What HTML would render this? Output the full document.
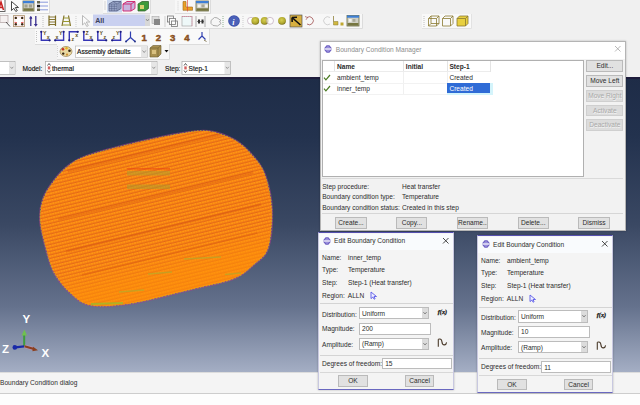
<!DOCTYPE html>
<html><head><meta charset="utf-8">
<style>
*{margin:0;padding:0;box-sizing:border-box}
html,body{width:640px;height:405px;overflow:hidden;background:#f0f0f0;font-family:"Liberation Sans",sans-serif;font-size:6.6px;color:#2c2c2c}
.a{position:absolute}
.t{position:absolute;white-space:nowrap;line-height:8px}
.btn{position:absolute;background:#e1e1e1;border:1px solid #bababa;text-align:center;white-space:nowrap;overflow:hidden}
#root{position:absolute;left:0;top:0;width:640px;height:405px;overflow:hidden}
.btn.dis{color:#a8a8a8;background:#dcdcdc;border-color:#cfcfcf;text-shadow:0.5px 0.5px 0 #f4f4f4}
</style></head><body>
<div id="root"><!-- toolbar -->
<svg class="a" style="left:0;top:0" width="640" height="77" viewBox="0 0 640 77">
  <defs><radialGradient id="olv" cx="0.45" cy="0.4" r="0.6"><stop offset="0" stop-color="#d8d050"/><stop offset="0.7" stop-color="#b0a830"/><stop offset="1" stop-color="#7a7018"/></radialGradient></defs>
  <!-- panels -->
  <rect x="0" y="0" width="49" height="13" fill="#fafafa"/>
  <path d="M49.5 0V13.5H0" fill="none" stroke="#dcdcdc"/>
  <rect x="103" y="0" width="47" height="13" fill="#f7f7f7"/>
  <path d="M150.5 0V13.5H103" fill="none" stroke="#dcdcdc"/>
  <rect x="175" y="0" width="35" height="13" fill="#f7f7f7"/>
  <path d="M210.5 0V13.5H175" fill="none" stroke="#dcdcdc"/>
  <rect x="0" y="14" width="362" height="14" fill="#f7f7f7"/>
  <path d="M362.5 14V28.5H0" fill="none" stroke="#dcdcdc"/>
  <rect x="422" y="14" width="49" height="14" fill="#f9f9f9"/>
  <path d="M471.5 14V28.5H422" fill="none" stroke="#e2e2e2"/>
  <rect x="35" y="29" width="174" height="15" fill="#f9f9f9"/>
  <path d="M209.5 29V44.5H35" fill="none" stroke="#dcdcdc"/>
  <rect x="57" y="44" width="112" height="15" fill="#f7f7f7"/>
  <path d="M169.5 44V59.5H57" fill="none" stroke="#dcdcdc"/>

  <!-- row1 -->
  <rect x="-1" y="-1" width="6" height="12.5" fill="#fff" stroke="#555" stroke-width="0.9"/>
  <path d="M-1.5 10L1 2L3.5 10M-0.5 7.5H2.5" fill="none" stroke="#c82020" stroke-width="1.5"/>
  <path d="M11.5 1.5V10.5L13.8 8.3L15.8 11.5L17.3 10.6L15.3 7.5H18.5Z" fill="#fff" stroke="#333" stroke-width="0.9"/>
  <rect x="23" y="1" width="11" height="10" fill="#cfcfc4" stroke="#6a6a40" stroke-width="0.8"/>
  <rect x="23" y="1" width="11" height="2.2" fill="#3d7fd6"/>
  <rect x="24.5" y="4.5" width="3" height="3" fill="#a0a090"/><rect x="29" y="4.5" width="3" height="3" fill="#a0a090"/>
  <rect x="23.5" y="8.3" width="10" height="2.5" fill="#767640"/>
  <rect x="37" y="1" width="3" height="2.5" fill="#6a6a50"/><rect x="37" y="4.8" width="3" height="2.5" fill="#222"/><rect x="37" y="8.5" width="3" height="2.5" fill="#6a6a50"/>
  <path d="M40 2.2H48M40 6H48M40 9.8H48" stroke="#7d8fd8" stroke-width="0.9"/>
  <path d="M105 1.5V10" stroke="#999" stroke-width="0.7" stroke-dasharray="1 1"/>
  <rect x="107" y="0" width="15" height="12.5" fill="#c9d6ee"/>
  <path d="M109 4L113 1.5H121V8.5L117 11H109Z" fill="#9aa6c8" stroke="#4a5478" stroke-width="0.7"/>
  <path d="M109 4H117V11M117 4L121 1.5M111.7 4V11M114.3 4V11M109 6.3H117M109 8.6H117M113 1.5L117 4M119 2.8V9.8" stroke="#4f5a80" stroke-width="0.5" fill="none"/>
  <path d="M123 4L127 1.5H135V8.5L131 11H123Z" fill="#c8b4de" stroke="#d0206a" stroke-width="0.9"/>
  <path d="M123 4H131V11M131 4L135 1.5" stroke="#d0206a" stroke-width="0.9" fill="none"/>
  <path d="M138 4L142 1.5H148.5V8.5L145 11H138Z" fill="#3f9a3a" stroke="#2a5a22" stroke-width="0.7"/>
  <rect x="140" y="5" width="4" height="4" fill="#d8d070"/>
  <path d="M178 1.5V11" stroke="#aaa" stroke-width="0.6" stroke-dasharray="0.8 1.2"/>
  <path d="M183 1.5H186V7H192.5V10.3H183Z" fill="#eca028" stroke="#9a6a18" stroke-width="0.6"/>
  <path d="M187.5 0V11.5" stroke="#e03838" stroke-width="0.6"/>
  <rect x="196" y="1" width="12.5" height="10" fill="#cfcfc4" stroke="#6a6a40" stroke-width="0.8"/>
  <rect x="196" y="1" width="12.5" height="2.2" fill="#3d7fd6"/>
  <rect x="196.5" y="8.3" width="11.5" height="2.5" fill="#767640"/>
  <rect x="197.8" y="4.5" width="2.8" height="2.8" fill="#f4f4f0"/><rect x="201.6" y="4.5" width="2.8" height="2.8" fill="#a8a898"/><rect x="205.2" y="4.5" width="2.4" height="2.8" fill="#f4f4f0"/>

  <!-- row2 -->
  <rect x="0" y="15.5" width="8" height="7" fill="#f4f0f0" stroke="#b0a0a0" stroke-width="0.7"/>
  <path d="M6 22L10 26.5" stroke="#555" stroke-width="1"/>
  <rect x="13.5" y="15.6" width="11" height="11" fill="#fbeef0" stroke="#b39a78" stroke-width="0.9"/>
  <circle cx="19" cy="21.1" r="3.2" fill="#fff"/>
  <circle cx="15.8" cy="17.9" r="1.2" fill="#3a2a10"/><circle cx="22.2" cy="17.9" r="1.2" fill="#3a2a10"/><circle cx="15.8" cy="24.3" r="1.2" fill="#3a2a10"/><circle cx="22.2" cy="24.3" r="1.2" fill="#3a2a10"/>
  <path d="M14.5 22.6H17M21 22.6H23.5" stroke="#e04a4a" stroke-width="0.9"/>
  <path d="M30.8 17.5V26M35.8 16V24.5" stroke="#3a3090" stroke-width="1.3"/>
  <path d="M29.2 18.8L30.8 16L32.4 18.8Z" fill="#3a3090"/><circle cx="30.8" cy="17.6" r="1.1" fill="#3a3090"/>
  <path d="M33.9 24L35.8 26.8L37.7 24Z" fill="#3a3090"/>
  <path d="M43 16V27" stroke="#aaa" stroke-width="0.7" stroke-dasharray="1 1"/>
  <path d="M49 15.5V26M55.5 15.5V26" stroke="#80702a" stroke-width="1.2"/>
  <path d="M49 17H55.5M49 19.5H55.5M49 22H55.5M49 24.5H55.5" stroke="#7a6a20" stroke-width="0.9"/>
  <path d="M64 15.5L62 26M68.5 15.5L70.5 26" stroke="#80702a" stroke-width="1.2"/>
  <path d="M63.5 18H69M63 21.5H69.5M62.5 25H70.5" stroke="#9a9a30" stroke-width="1"/>
  <path d="M76 16V27" stroke="#bbb" stroke-width="0.7" stroke-dasharray="1 1"/>
  <path d="M82.5 15.5V25L84.8 22.8L86.8 26.5L88.3 25.6L86.3 22H89.8Z" fill="#fafafa" stroke="#aaa" stroke-width="0.8"/>
  <rect x="93" y="14.5" width="52" height="11.5" fill="#c9d0f0"/>
  <rect x="145" y="14.5" width="5" height="11.5" fill="#d8d8d8"/>
  <path d="M146 19L147.5 21L149 19" stroke="#777" stroke-width="0.7" fill="none"/>
  <text x="95.2" y="23.2" font-size="7" font-weight="bold" fill="#3a4058" font-family="Liberation Sans">All</text>
  <rect x="152" y="16.5" width="7" height="7" fill="#ddd" stroke="#aaa" stroke-width="0.6"/><rect x="154" y="19" width="6" height="6" fill="#888"/>
  <path d="M165 16V27" stroke="#bbb" stroke-width="0.7"/>
  <rect x="167.5" y="16" width="6" height="6" fill="none" stroke="#777" stroke-width="0.8"/><rect x="169.5" y="18.5" width="6" height="6" fill="#fff" stroke="#777" stroke-width="0.8"/><rect x="171.5" y="21" width="6" height="5.5" fill="none" stroke="#777" stroke-width="0.8"/>
  <rect x="182" y="16.5" width="10" height="9.5" fill="#eef8f8" stroke="#999" stroke-width="0.6"/>
  <path d="M182 16.5H192V26" stroke="#e07090" stroke-width="0.7" stroke-dasharray="1.2 0.8" fill="none"/>
  <path d="M196 16V27M205 16V27" stroke="#888" stroke-width="0.7"/>
  <path d="M197 21.5H204" stroke="#555" stroke-width="0.7"/><rect x="198" y="19.5" width="2" height="4" fill="#333"/><rect x="201.5" y="19.5" width="2" height="4" fill="#333"/>
  <path d="M211 20.5L214.5 17.5L217 17.8L221 20.5L219.5 21.5L221 23.5L217.5 26L213 25.5L211 23.5Z" fill="#f6f6f6" stroke="#9a9a9a" stroke-width="0.8"/>
  <path d="M223 16V27" stroke="#6a9a6a" stroke-width="0.7" stroke-dasharray="1 1"/>
  <circle cx="234" cy="21" r="5.8" fill="#3a4ea8"/>
  <circle cx="234" cy="21" r="5" fill="#4a60b8"/>
  <text x="232.3" y="24.5" font-size="8" font-style="italic" font-weight="bold" fill="#fff" font-family="Liberation Serif">i</text>
  <path d="M243 16V27" stroke="#bbb" stroke-width="0.7" stroke-dasharray="1 1"/>
  <circle cx="251" cy="20.8" r="3.5" fill="#fff" stroke="#b59ab0" stroke-width="0.6"/>
  <circle cx="255.3" cy="20.8" r="3.9" fill="url(#olv)"/>
  <circle cx="264.6" cy="20.8" r="3.9" fill="url(#olv)"/>
  <circle cx="270" cy="20.8" r="3.5" fill="#fff" fill-opacity="0.6" stroke="#b59ab0" stroke-width="0.6"/>
  <circle cx="282" cy="20.8" r="3.9" fill="url(#olv)"/>
  <rect x="290" y="15" width="12" height="12" fill="#d8b040" stroke="#555" stroke-width="0.7"/>
  <path d="M292 17.5L300.5 25M292 17.5L297 17.3M292 17.5L292.2 22" stroke="#111" stroke-width="1.6" fill="none"/>
  <path d="M307 17.5A4 4 0 1 1 307 24" fill="none" stroke="#a05050" stroke-width="0.8"/>
  <path d="M305 16.5L307.5 17.5L306 19.8" fill="none" stroke="#a05050" stroke-width="0.7"/>
  <path d="M330 17.5A4 4 0 1 0 330 24" fill="none" stroke="#c8c8c8" stroke-width="0.8"/>
  <path d="M333.5 16V21.5H338V25H333.5Z" fill="#d0b840" stroke="#8a7a30" stroke-width="0.5"/>
  <rect x="340.5" y="22.5" width="3" height="3" fill="#c0a830"/>
  <rect x="347" y="15.5" width="12" height="10.5" fill="#cfcfc4" stroke="#6a6a40" stroke-width="0.8"/>
  <rect x="347" y="15.5" width="12" height="2.2" fill="#3d7fd6"/>
  <rect x="347.5" y="23" width="11" height="2.7" fill="#767640"/>
  <rect x="348.8" y="19" width="2.8" height="2.8" fill="#f4f4f0"/><rect x="352.6" y="19" width="2.8" height="2.8" fill="#a8a898"/>
  <path d="M424 16V27" stroke="#aaa" stroke-width="0.7" stroke-dasharray="1 1"/>
  <g fill="none" stroke="#8a7a30" stroke-width="0.8">
    <path d="M428.5 18.5L431 16H439V23.5L436.5 26H428.5Z M428.5 18.5H436.5V26M436.5 18.5L439 16 M431 16V23.5H439M431 23.5L428.5 26"/>
    <path d="M442.5 18.5L445 16H453V23.5L450.5 26H442.5Z M442.5 18.5H450.5V26M450.5 18.5L453 16"/>
  </g>
  <path d="M457 18.5L459.5 16H468V23.5L465.5 26H457Z" fill="#e8d040" stroke="#8a7a30" stroke-width="0.8"/>
  <path d="M457 18.5H465.5V26M465.5 18.5L468 16" fill="none" stroke="#8a7a30" stroke-width="0.8"/>

  <!-- row3 -->
  <path d="M36.5 31V42" stroke="#aaa" stroke-width="0.7" stroke-dasharray="1 1"/>
  <g stroke="#3535b5" stroke-width="1.4" fill="none" stroke-linecap="round">
  <path d="M41.3 31.8V40.3H49.6"/>
  <path d="M63.6 31.8V40.3H55.2"/>
  <path d="M69.3 40.3V31.8H77.7"/>
  <path d="M83.8 31.8V40.3H92.2"/>
  <path d="M97.8 31.8V40.3H106.2"/>
  <path d="M120.6 31.8V40.3H112.2"/>
  </g>
  <g fill="#1c1c80">
  <circle cx="41.3" cy="31.8" r="1.15"/>
  <circle cx="49.6" cy="40.3" r="1.15"/>
  <circle cx="63.6" cy="31.8" r="1.15"/>
  <circle cx="55.2" cy="40.3" r="1.15"/>
  <circle cx="69.3" cy="40.3" r="1.15"/>
  <circle cx="77.7" cy="31.8" r="1.15"/>
  <circle cx="83.8" cy="31.8" r="1.15"/>
  <circle cx="92.2" cy="40.3" r="1.15"/>
  <circle cx="97.8" cy="31.8" r="1.15"/>
  <circle cx="106.2" cy="40.3" r="1.15"/>
  <circle cx="120.6" cy="31.8" r="1.15"/>
  <circle cx="112.2" cy="40.3" r="1.15"/>
  </g>
  <g font-family="Liberation Sans" font-size="5.2" fill="#5e5020" font-weight="bold">
  <text x="42.9" y="35.0">Y</text><text x="46.800000000000004" y="38.6">x</text>
  <text x="55.400000000000006" y="38.6">x</text><text x="59.0" y="35.0">Y</text>
  <text x="71.5" y="41.099999999999994">z</text><text x="75.3" y="37.4">x</text>
  <text x="85.39999999999999" y="35.0">Z</text><text x="89.4" y="38.6">x</text>
  <text x="99.39999999999999" y="35.0">Y</text><text x="103.4" y="38.6">z</text>
  <text x="112.4" y="38.6">z</text><text x="116.0" y="35.0">Y</text>
  </g>
  <path d="M130.5 37.5V31.5M130.5 37.5L126 41.5M130.5 37.5L135 41.5" stroke="#2f3fb0" stroke-width="1.2" fill="none"/>
  <circle cx="126" cy="41.5" r="0.9" fill="#1a2a80"/><circle cx="135" cy="41.5" r="0.9" fill="#1a2a80"/>
  <g font-family="Liberation Sans" font-size="9.6" font-weight="bold" fill="#8a5020" stroke="#8a5020" stroke-width="0.45">
    <text x="141.5" y="40.5">1</text><text x="155.8" y="40.5">2</text><text x="170" y="40.5">3</text><text x="184.3" y="40.5">4</text>
  </g>
  <path d="M202 36V32M202 36L198.5 39.5M202 36L205.5 39.5" stroke="#2f3fb0" stroke-width="1.2" fill="none"/>
  <path d="M204 40L206.5 41.5" stroke="#6a5a30" stroke-width="0.8"/>

  <!-- row4 -->
  <path d="M57.5 46V57" stroke="#aaa" stroke-width="0.6" stroke-dasharray="0.8 1.2"/>
  <ellipse cx="66" cy="51.5" rx="6" ry="5" fill="#e8d8a0" stroke="#8a7040" stroke-width="0.6"/>
  <circle cx="63" cy="49.3" r="1.3" fill="#c83020"/><circle cx="66.5" cy="48.3" r="1.2" fill="#e8b020"/><circle cx="69.5" cy="50.8" r="1.3" fill="#302010"/><circle cx="63.2" cy="53.6" r="1.2" fill="#302010"/><circle cx="67" cy="54.6" r="1.1" fill="#d09030"/>
  <rect x="75.5" y="46" width="72" height="11.5" fill="#fff" stroke="#b0b0b0" stroke-width="0.6"/>
  <rect x="141" y="46.3" width="6.2" height="11" fill="#e6e6e6"/>
  <path d="M142.5 50.5L144.2 52.5L145.8 50.5" stroke="#777" stroke-width="0.7" fill="none"/>
  <text x="77" y="54.3" font-size="6.6" fill="#111" stroke="#111" stroke-width="0.15" font-family="Liberation Sans">Assembly defaults</text>
  <path d="M150 48L153 45.5H161V54L158 57H150Z" fill="#a89050" stroke="#6a5a30" stroke-width="0.6"/>
  <path d="M150 48H158V57M158 48L161 45.5" stroke="#6a5a30" stroke-width="0.6" fill="none"/>
  <rect x="152" y="50" width="4" height="4" fill="#d8c080"/>
  <path d="M164.5 50L166.5 52.5L168.5 50Z" fill="#111"/>

  <!-- row5 -->
  <rect x="-1" y="61.5" width="16" height="13" fill="#fff" stroke="#a8a8a8" stroke-width="0.7"/>
  <rect x="9" y="62" width="5.5" height="12" fill="#e6e6e6"/>
  <path d="M10.3 66.8L11.8 68.5L13.3 66.8" stroke="#777" stroke-width="0.7" fill="none"/>
  <text x="22.5" y="71" font-size="6.6" fill="#111" stroke="#111" stroke-width="0.15" font-family="Liberation Sans">Model:</text>
  <rect x="45.5" y="61.5" width="111.5" height="13" fill="#fff" stroke="#a8a8a8" stroke-width="0.7"/>
  <rect x="151" y="62" width="5.5" height="12" fill="#e6e6e6"/>
  <path d="M152.3 66.8L153.8 68.5L155.3 66.8" stroke="#777" stroke-width="0.7" fill="none"/>
  <path d="M47.5 65.5L49 63.5L50.5 65.5M47.5 70.5L49 72.5L50.5 70.5" stroke="#333" stroke-width="0.8" fill="none"/>
  <rect x="47.8" y="66.4" width="2.4" height="3" fill="#d06060"/>
  <text x="52" y="71" font-size="6.6" fill="#111" stroke="#111" stroke-width="0.15" font-family="Liberation Sans">thermal</text>
  <text x="165" y="71" font-size="6.6" fill="#111" stroke="#111" stroke-width="0.15" font-family="Liberation Sans">Step:</text>
  <rect x="182" y="61.5" width="48.5" height="13" fill="#fff" stroke="#a8a8a8" stroke-width="0.7"/>
  <rect x="224.5" y="62" width="5.5" height="12" fill="#e6e6e6"/>
  <path d="M225.8 66.8L227.3 68.5L228.8 66.8" stroke="#777" stroke-width="0.7" fill="none"/>
  <path d="M184 65.5L185.5 63.5L187 65.5M184 70.5L185.5 72.5L187 70.5" stroke="#333" stroke-width="0.8" fill="none"/>
  <rect x="184.3" y="66.4" width="2.4" height="3" fill="#d06060"/>
  <text x="188.5" y="71" font-size="6.6" fill="#111" stroke="#111" stroke-width="0.15" font-family="Liberation Sans">Step-1</text>
</svg>
<div class="a" style="left:0;top:77px;width:640px;height:295px;background:linear-gradient(#1e2c47 0%,#23324e 20%,#3a4863 50%,#65728d 78%,#a4aec4 100%)"></div>
<div class="a" style="left:0;top:77px;width:640px;height:2px;background:#1e1c3c"></div>
<svg class="a" style="left:0;top:77px" width="640" height="295" viewBox="0 77 640 295">
  <defs>
    <pattern id="mesh" width="2.6" height="3.4" patternUnits="userSpaceOnUse" patternTransform="rotate(-13.5)">
      <rect width="2.6" height="3.4" fill="#ff9614"/>
      <path d="M0 1H2.6" stroke="#d8561a" stroke-width="0.9"/>
      <path d="M0.6 0V3.4" stroke="#f27412" stroke-width="0.6"/>
    </pattern>
    <linearGradient id="lowg" x1="0" y1="0" x2="0" y2="1"><stop offset="0" stop-color="#ff9008" stop-opacity="0"/><stop offset="0.35" stop-color="#ff9008" stop-opacity="0.6"/><stop offset="1" stop-color="#ff9008" stop-opacity="0.7"/></linearGradient>
    <clipPath id="cc"><path d="M40.6 221.0C40.1 212.8 41.1 205.8 43.5 199.0C45.9 192.2 50.6 185.7 55.0 180.0C59.4 174.3 64.4 169.1 70.0 165.0C75.6 160.9 78.1 159.2 88.7 155.6C99.3 152.0 118.1 147.2 133.7 143.5C149.3 139.8 170.0 135.5 182.5 133.5C195.0 131.5 199.9 130.3 208.7 131.5C217.4 132.7 227.5 136.3 235.0 140.6C242.5 144.9 248.7 151.6 253.7 157.5C258.7 163.4 262.0 167.2 265.0 176.0C268.0 184.8 271.1 198.0 271.5 210.0C271.9 222.0 270.7 238.9 267.7 248.0C264.7 257.1 259.2 259.3 253.4 264.4C247.6 269.5 243.2 274.5 233.0 278.6C222.8 282.7 209.4 284.7 192.5 288.8C175.6 292.8 148.5 300.3 131.6 303.0C114.7 305.7 101.2 306.7 91.0 305.0C80.8 303.3 76.7 298.2 70.6 292.8C64.5 287.4 58.5 280.0 54.4 272.5C50.3 265.0 48.5 256.6 46.2 248.0C44.0 239.4 41.1 229.2 40.6 221.0Z"/></clipPath>
  </defs>
  <path d="M40.6 221.0C40.1 212.8 41.1 205.8 43.5 199.0C45.9 192.2 50.6 185.7 55.0 180.0C59.4 174.3 64.4 169.1 70.0 165.0C75.6 160.9 78.1 159.2 88.7 155.6C99.3 152.0 118.1 147.2 133.7 143.5C149.3 139.8 170.0 135.5 182.5 133.5C195.0 131.5 199.9 130.3 208.7 131.5C217.4 132.7 227.5 136.3 235.0 140.6C242.5 144.9 248.7 151.6 253.7 157.5C258.7 163.4 262.0 167.2 265.0 176.0C268.0 184.8 271.1 198.0 271.5 210.0C271.9 222.0 270.7 238.9 267.7 248.0C264.7 257.1 259.2 259.3 253.4 264.4C247.6 269.5 243.2 274.5 233.0 278.6C222.8 282.7 209.4 284.7 192.5 288.8C175.6 292.8 148.5 300.3 131.6 303.0C114.7 305.7 101.2 306.7 91.0 305.0C80.8 303.3 76.7 298.2 70.6 292.8C64.5 287.4 58.5 280.0 54.4 272.5C50.3 265.0 48.5 256.6 46.2 248.0C44.0 239.4 41.1 229.2 40.6 221.0Z" fill="#ff8c08" stroke="#b03c8c" stroke-width="3" stroke-opacity="0.55"/>
  <path d="M40.6 221.0C40.1 212.8 41.1 205.8 43.5 199.0C45.9 192.2 50.6 185.7 55.0 180.0C59.4 174.3 64.4 169.1 70.0 165.0C75.6 160.9 78.1 159.2 88.7 155.6C99.3 152.0 118.1 147.2 133.7 143.5C149.3 139.8 170.0 135.5 182.5 133.5C195.0 131.5 199.9 130.3 208.7 131.5C217.4 132.7 227.5 136.3 235.0 140.6C242.5 144.9 248.7 151.6 253.7 157.5C258.7 163.4 262.0 167.2 265.0 176.0C268.0 184.8 271.1 198.0 271.5 210.0C271.9 222.0 270.7 238.9 267.7 248.0C264.7 257.1 259.2 259.3 253.4 264.4C247.6 269.5 243.2 274.5 233.0 278.6C222.8 282.7 209.4 284.7 192.5 288.8C175.6 292.8 148.5 300.3 131.6 303.0C114.7 305.7 101.2 306.7 91.0 305.0C80.8 303.3 76.7 298.2 70.6 292.8C64.5 287.4 58.5 280.0 54.4 272.5C50.3 265.0 48.5 256.6 46.2 248.0C44.0 239.4 41.1 229.2 40.6 221.0Z" fill="#ff8c08" stroke="#a8b830" stroke-width="1.6" stroke-dasharray="1.5 1.5" stroke-opacity="0.9"/>
  <g clip-path="url(#cc)">
    <rect x="30" y="120" width="260" height="200" fill="url(#mesh)"/>
    <g transform="rotate(-13.5 156 214)" opacity="0.28">
      <rect x="80" y="150" width="160" height="3" fill="#c84010"/>
      <rect x="60" y="195" width="200" height="2.5" fill="#c84010"/>
      <rect x="60" y="228" width="200" height="2.5" fill="#c84010"/>
      <rect x="70" y="255" width="180" height="2" fill="#c84010"/>
    </g>
    <g transform="rotate(-13.5 156 217)"><rect x="20" y="248" width="280" height="80" fill="url(#lowg)"/></g>
    <rect x="127" y="168" width="43" height="1.6" fill="#e84010" opacity="0.5"/>
    <rect x="127" y="171" width="43" height="4.5" fill="#a8a030" opacity="0.5"/>
    <rect x="127" y="184.5" width="43" height="4.5" fill="#a0a030" opacity="0.45"/>
    <path d="M184 259L221 257" stroke="#a8b030" stroke-width="1.6" opacity="0.6"/>
    <path d="M148 274L172 272" stroke="#a8b030" stroke-width="1.6" opacity="0.6"/>
    <path d="M119 292L144 290" stroke="#a8b030" stroke-width="1.6" opacity="0.6"/>
    <path d="M91 304L123 303" stroke="#90c030" stroke-width="2" opacity="0.7"/>
    <path d="M225 274.5L241 273" stroke="#a8b030" stroke-width="1.6" opacity="0.6"/>
  </g>
  <!-- triad -->
  <path d="M24.2 346V333.5" stroke="#3c9c3c" stroke-width="2"/>
  <path d="M21.6 335.5L24.4 329.5L27 335.5Z" fill="#70c050"/>
  <path d="M24.5 346.3L34 349" stroke="#d890b8" stroke-width="3.5" opacity="0.5"/>
  <path d="M24.5 346.3L34 349" stroke="#8a4020" stroke-width="2"/>
  <path d="M33 346.8L38 350.3L32.4 351.3Z" fill="#8a4020"/>
  <path d="M24 346.3L15.5 347.3" stroke="#1a2aa8" stroke-width="2.2"/>
  <circle cx="14.8" cy="347.4" r="2.3" fill="#1a2aa8"/>
  <g font-family="Liberation Sans" font-weight="bold" font-size="11.5" fill="#fff" text-anchor="middle">
    <text x="26.3" y="322.8">Y</text>
    <text x="5.6" y="353.1">Z</text>
    <text x="45.3" y="357">X</text>
  </g>
</svg>
<div class="a" style="left:0;top:372px;width:640px;height:22px;background:#f4f4f4;border-top:1px solid #dcdcdc"></div>
<div class="t" style="left:0;top:379px">Boundary Condition dialog</div>
<div class="a" style="left:0;top:393px;width:640px;height:12px;background:#fdfdfd;border-top:1px solid #cdcdcd"></div>
<div class="a" style="left:319.5px;top:40.5px;width:306.00px;height:190.50px;background:#f2f2f2;border:1px solid #b4b4b4;box-shadow:0 0 2px rgba(0,0,0,.25)"></div>
<div class="a" style="left:320.5px;top:41.5px;width:304.00px;height:17.00px;background:#fff"></div>
<svg class="a" style="left:324.4px;top:45.1px" width="8" height="8" viewBox="0 0 10 10"><path d="M3.3 0.4H6.7L9.8 4V6L6.7 9.6H3.3L0.2 6V4Z" fill="#6a5cc0"/><path d="M4 1.6H6L8.2 4.2V5.8L6 8.4H4L1.8 5.8V4.2Z" fill="#9a90dc"/><path d="M0 5H10" stroke="#fff" stroke-width="1.4"/></svg>
<div class="t" style="left:335.8px;top:46.40px;color:#8c8c8c">Boundary Condition Manager</div>
<svg class="a" style="left:614.05px;top:44.95px" width="7.5" height="7.5" viewBox="-3.75 -3.75 7.5 7.5"><path d="M-2.75 -2.75L2.75 2.75M2.75 -2.75L-2.75 2.75" stroke="#a0a0a0" stroke-width="0.75"/></svg>
<div class="a" style="left:322px;top:60px;width:261.50px;height:116.50px;background:#fff;border:1px solid #b0b0b0"></div>
<div class="a" style="left:334px;top:61px;width:1.00px;height:10.50px;background:#e4e4e4"></div>
<div class="a" style="left:403px;top:61px;width:1.00px;height:10.50px;background:#e4e4e4"></div>
<div class="a" style="left:446.5px;top:61px;width:1.00px;height:10.50px;background:#e4e4e4"></div>
<div class="a" style="left:490px;top:61px;width:1.00px;height:10.50px;background:#e4e4e4"></div>
<div class="a" style="left:403px;top:71.5px;width:1.00px;height:22.50px;background:#f0f0f0"></div>
<div class="a" style="left:446.5px;top:71.5px;width:1.00px;height:22.50px;background:#f0f0f0"></div>
<div class="a" style="left:323px;top:71px;width:167.00px;height:1.00px;background:#ececec"></div>
<div class="a" style="left:323px;top:82.5px;width:167.00px;height:0.80px;background:#f2f2f2"></div>
<div class="a" style="left:323px;top:93.5px;width:167.00px;height:0.80px;background:#f2f2f2"></div>
<div class="t" style="left:337px;top:63.40px;font-weight:bold">Name</div>
<div class="t" style="left:405.8px;top:63.40px;font-weight:bold">Initial</div>
<div class="t" style="left:449.4px;top:63.40px;font-weight:bold">Step-1</div>
<svg class="a" style="left:323px;top:73.7px" width="8" height="7" viewBox="0 0 8 7"><path d="M1 3.6L2.9 5.9L7 1" stroke="#4a7a22" stroke-width="1.2" fill="none"/></svg>
<div class="t" style="left:337px;top:74.10px;">ambient_temp</div>
<div class="t" style="left:449.4px;top:74.10px;">Created</div>
<div class="a" style="left:446.5px;top:82.5px;width:46.50px;height:12.00px;background:#d4f4fb"></div>
<div class="a" style="left:447px;top:83.3px;width:43.00px;height:10.10px;background:#2f6bd6"></div>
<svg class="a" style="left:323px;top:84.6px" width="8" height="7" viewBox="0 0 8 7"><path d="M1 3.6L2.9 5.9L7 1" stroke="#4a7a22" stroke-width="1.2" fill="none"/></svg>
<div class="t" style="left:337px;top:85.00px;">inner_temp</div>
<div class="t" style="left:449.4px;top:85.00px;color:#fff">Created</div>
<div class="btn" style="left:586.3px;top:60.2px;width:37.10px;height:12.20px;line-height:10.20px">Edit...</div>
<div class="btn" style="left:586.3px;top:75.3px;width:37.10px;height:12.00px;line-height:10.00px">Move Left</div>
<div class="btn dis" style="left:586.3px;top:90.2px;width:37.10px;height:11.40px;line-height:9.40px">Move Right</div>
<div class="btn dis" style="left:586.3px;top:105px;width:37.10px;height:11.40px;line-height:9.40px">Activate</div>
<div class="btn dis" style="left:586.3px;top:119.4px;width:37.10px;height:11.80px;line-height:9.80px">Deactivate</div>
<div class="a" style="left:322px;top:178px;width:301.00px;height:1.00px;background:#dadada"></div>
<div class="t" style="left:322.2px;top:183.10px;">Step procedure:</div>
<div class="t" style="left:402px;top:183.10px;">Heat transfer</div>
<div class="t" style="left:322.2px;top:193.20px;">Boundary condition type:</div>
<div class="t" style="left:402px;top:193.20px;">Temperature</div>
<div class="t" style="left:322.2px;top:203.50px;">Boundary condition status:</div>
<div class="t" style="left:402px;top:203.50px;">Created in this step</div>
<div class="a" style="left:322px;top:213.3px;width:301.00px;height:1.00px;background:#d6d6d6"></div>
<div class="btn" style="left:335px;top:217px;width:32.00px;height:11.50px;line-height:9.50px">Create...</div>
<div class="btn" style="left:396.3px;top:217px;width:31.20px;height:11.50px;line-height:9.50px">Copy...</div>
<div class="btn" style="left:457px;top:217px;width:31.00px;height:11.50px;line-height:9.50px">Rename...</div>
<div class="btn" style="left:517.5px;top:217px;width:31.50px;height:11.50px;line-height:9.50px">Delete...</div>
<div class="btn" style="left:578px;top:217px;width:32.00px;height:11.50px;line-height:9.50px">Dismiss</div>
<div class="a" style="left:318px;top:232.2px;width:136.40px;height:157.60px;background:#f4f4f4;border:1px solid #c8c8e0;border-top:1.5px solid #5550b0;border-bottom:1.5px solid #6a68c0;box-shadow:0 0 2px rgba(0,0,0,.25)"></div>
<div class="a" style="left:319px;top:233.5px;width:134.40px;height:16.50px;background:#f9fbfd"></div>
<svg class="a" style="left:322.5px;top:236.6px" width="8" height="8" viewBox="0 0 10 10"><path d="M3.3 0.4H6.7L9.8 4V6L6.7 9.6H3.3L0.2 6V4Z" fill="#6a5cc0"/><path d="M4 1.6H6L8.2 4.2V5.8L6 8.4H4L1.8 5.8V4.2Z" fill="#9a90dc"/><path d="M0 5H10" stroke="#fff" stroke-width="1.4"/></svg>
<div class="t" style="left:334.1px;top:237.45px;font-size:6.6px">Edit Boundary Condition</div>
<svg class="a" style="left:442.25px;top:236.75px" width="7.5" height="7.5" viewBox="-3.75 -3.75 7.5 7.5"><path d="M-2.75 -2.75L2.75 2.75M2.75 -2.75L-2.75 2.75" stroke="#333" stroke-width="0.9"/></svg>
<div class="t" style="left:322px;top:253.70px;">Name:</div>
<div class="t" style="left:348px;top:253.70px;">inner_temp</div>
<div class="t" style="left:322px;top:266.20px;">Type:</div>
<div class="t" style="left:348px;top:266.20px;">Temperature</div>
<div class="t" style="left:322px;top:278.70px;">Step:</div>
<div class="t" style="left:348px;top:278.70px;">Step-1 (Heat transfer)</div>
<div class="t" style="left:322px;top:291.50px;">Region:</div>
<div class="t" style="left:347.8px;top:291.50px;">ALLN</div>
<svg class="a" style="left:369.5px;top:290.8px" width="8" height="9" viewBox="0 0 8 9"><path d="M1 1V7.6L2.9 6L4.1 8.2L5.1 7.7L4 5.5H6.5Z" fill="#eef" stroke="#5a5ae8" stroke-width="0.9"/></svg>
<div class="a" style="left:320px;top:303.4px;width:132.50px;height:1.00px;background:#d4d4d4"></div>
<div class="t" style="left:322px;top:310.50px;">Distribution:</div>
<div class="a" style="left:359px;top:306.8px;width:70.00px;height:12.70px;background:#fff;border:1px solid #bcbcbc"></div>
<div class="a" style="left:422px;top:307.8px;width:6.00px;height:10.70px;background:#dcdcdc"></div>
<svg class="a" style="left:423px;top:311.15px" width="4" height="4" viewBox="0 0 4 4"><path d="M0.3 1L2 3L3.7 1" stroke="#666" stroke-width="0.7" fill="none"/></svg>
<div class="t" style="left:362px;top:309.85px;">Uniform</div>
<svg class="a" style="left:436px;top:306px" width="13" height="11" viewBox="0 0 13 11"><text x="1.7" y="8.2" font-family="Liberation Serif" font-style="italic" font-weight="bold" font-size="6.3" fill="#111" stroke="#111" stroke-width="0.25">f(x)</text></svg>
<div class="t" style="left:322px;top:325.40px;">Magnitude:</div>
<div class="a" style="left:359px;top:322.5px;width:71.80px;height:12.00px;background:#fff;border:1px solid #bcbcbc"></div>
<div class="t" style="left:362px;top:325.20px;">200</div>
<div class="t" style="left:322px;top:340.70px;">Amplitude:</div>
<div class="a" style="left:359px;top:337.5px;width:70.00px;height:12.50px;background:#fff;border:1px solid #bcbcbc"></div>
<div class="a" style="left:422px;top:338.5px;width:6.00px;height:10.50px;background:#dcdcdc"></div>
<svg class="a" style="left:423px;top:341.75px" width="4" height="4" viewBox="0 0 4 4"><path d="M0.3 1L2 3L3.7 1" stroke="#666" stroke-width="0.7" fill="none"/></svg>
<div class="t" style="left:362px;top:340.45px;">(Ramp)</div>
<svg class="a" style="left:436.5px;top:337.5px" width="11" height="10" viewBox="0 0 11 10"><path d="M1.3 8.8V1.2M1.3 1.2C3.2 0.7 4.6 1 4.9 3.6C5.2 6.5 6.3 7 7.4 6.9C8.8 6.8 9.4 5.6 9.6 4.3" stroke="#4a3a2a" stroke-width="1.1" fill="none"/></svg>
<div class="a" style="left:320px;top:354.8px;width:132.50px;height:1.00px;background:#d4d4d4"></div>
<div class="t" style="left:322px;top:360.20px;">Degrees of freedom:</div>
<div class="a" style="left:382.2px;top:357.8px;width:69.80px;height:11.70px;background:#fff;border:1px solid #bcbcbc"></div>
<div class="t" style="left:385.2px;top:360.35px;">15</div>
<div class="a" style="left:320px;top:372px;width:132.50px;height:1.00px;background:#d8d8d8"></div>
<div class="btn" style="left:338px;top:375.3px;width:29.80px;height:11.70px;line-height:9.70px">OK</div>
<div class="btn" style="left:405px;top:375.3px;width:29.20px;height:11.70px;line-height:9.70px">Cancel</div>
<div class="a" style="left:477px;top:235.39999999999998px;width:136.40px;height:157.60px;background:#f4f4f4;border:1px solid #c8c8e0;border-top:1.5px solid #5550b0;border-bottom:1.5px solid #6a68c0;box-shadow:0 0 2px rgba(0,0,0,.25)"></div>
<div class="a" style="left:478px;top:236.7px;width:134.40px;height:16.50px;background:#f9fbfd"></div>
<svg class="a" style="left:481.5px;top:239.79999999999998px" width="8" height="8" viewBox="0 0 10 10"><path d="M3.3 0.4H6.7L9.8 4V6L6.7 9.6H3.3L0.2 6V4Z" fill="#6a5cc0"/><path d="M4 1.6H6L8.2 4.2V5.8L6 8.4H4L1.8 5.8V4.2Z" fill="#9a90dc"/><path d="M0 5H10" stroke="#fff" stroke-width="1.4"/></svg>
<div class="t" style="left:493.1px;top:240.65px;font-size:6.6px">Edit Boundary Condition</div>
<svg class="a" style="left:601.25px;top:239.95px" width="7.5" height="7.5" viewBox="-3.75 -3.75 7.5 7.5"><path d="M-2.75 -2.75L2.75 2.75M2.75 -2.75L-2.75 2.75" stroke="#333" stroke-width="0.9"/></svg>
<div class="t" style="left:481px;top:256.90px;">Name:</div>
<div class="t" style="left:507px;top:256.90px;">ambient_temp</div>
<div class="t" style="left:481px;top:269.40px;">Type:</div>
<div class="t" style="left:507px;top:269.40px;">Temperature</div>
<div class="t" style="left:481px;top:281.90px;">Step:</div>
<div class="t" style="left:507px;top:281.90px;">Step-1 (Heat transfer)</div>
<div class="t" style="left:481px;top:294.70px;">Region:</div>
<div class="t" style="left:506.8px;top:294.70px;">ALLN</div>
<svg class="a" style="left:528.5px;top:294.0px" width="8" height="9" viewBox="0 0 8 9"><path d="M1 1V7.6L2.9 6L4.1 8.2L5.1 7.7L4 5.5H6.5Z" fill="#eef" stroke="#5a5ae8" stroke-width="0.9"/></svg>
<div class="a" style="left:479px;top:306.59999999999997px;width:132.50px;height:1.00px;background:#d4d4d4"></div>
<div class="t" style="left:481px;top:313.70px;">Distribution:</div>
<div class="a" style="left:518px;top:310.0px;width:70.00px;height:12.70px;background:#fff;border:1px solid #bcbcbc"></div>
<div class="a" style="left:581px;top:311.0px;width:6.00px;height:10.70px;background:#dcdcdc"></div>
<svg class="a" style="left:582px;top:314.35px" width="4" height="4" viewBox="0 0 4 4"><path d="M0.3 1L2 3L3.7 1" stroke="#666" stroke-width="0.7" fill="none"/></svg>
<div class="t" style="left:521px;top:313.05px;">Uniform</div>
<svg class="a" style="left:595px;top:309.2px" width="13" height="11" viewBox="0 0 13 11"><text x="1.7" y="8.2" font-family="Liberation Serif" font-style="italic" font-weight="bold" font-size="6.3" fill="#111" stroke="#111" stroke-width="0.25">f(x)</text></svg>
<div class="t" style="left:481px;top:328.60px;">Magnitude:</div>
<div class="a" style="left:518px;top:325.7px;width:71.80px;height:12.00px;background:#fff;border:1px solid #bcbcbc"></div>
<div class="t" style="left:521px;top:328.40px;">10</div>
<div class="t" style="left:481px;top:343.90px;">Amplitude:</div>
<div class="a" style="left:518px;top:340.7px;width:70.00px;height:12.50px;background:#fff;border:1px solid #bcbcbc"></div>
<div class="a" style="left:581px;top:341.7px;width:6.00px;height:10.50px;background:#dcdcdc"></div>
<svg class="a" style="left:582px;top:344.95px" width="4" height="4" viewBox="0 0 4 4"><path d="M0.3 1L2 3L3.7 1" stroke="#666" stroke-width="0.7" fill="none"/></svg>
<div class="t" style="left:521px;top:343.65px;">(Ramp)</div>
<svg class="a" style="left:595.5px;top:340.7px" width="11" height="10" viewBox="0 0 11 10"><path d="M1.3 8.8V1.2M1.3 1.2C3.2 0.7 4.6 1 4.9 3.6C5.2 6.5 6.3 7 7.4 6.9C8.8 6.8 9.4 5.6 9.6 4.3" stroke="#4a3a2a" stroke-width="1.1" fill="none"/></svg>
<div class="a" style="left:479px;top:358.0px;width:132.50px;height:1.00px;background:#d4d4d4"></div>
<div class="t" style="left:481px;top:363.40px;">Degrees of freedom:</div>
<div class="a" style="left:541.2px;top:361.0px;width:69.80px;height:11.70px;background:#fff;border:1px solid #bcbcbc"></div>
<div class="t" style="left:544.2px;top:363.55px;">11</div>
<div class="a" style="left:479px;top:375.2px;width:132.50px;height:1.00px;background:#d8d8d8"></div>
<div class="btn" style="left:497px;top:378.5px;width:29.80px;height:11.70px;line-height:9.70px">OK</div>
<div class="btn" style="left:564px;top:378.5px;width:29.20px;height:11.70px;line-height:9.70px">Cancel</div>
</div></body></html>
